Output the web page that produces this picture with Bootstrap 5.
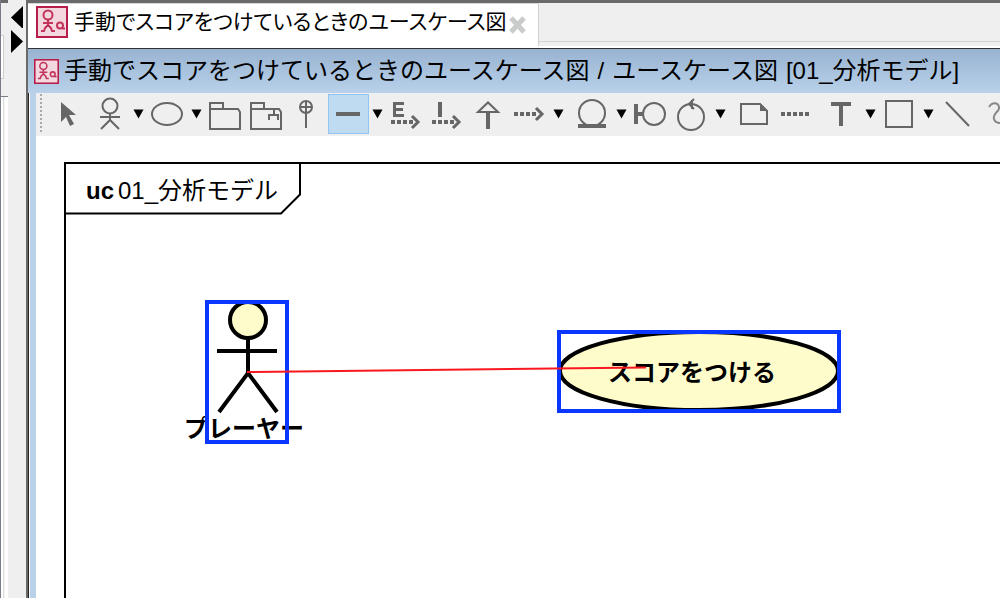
<!DOCTYPE html>
<html lang="ja">
<head>
<meta charset="utf-8">
<meta name="viewport" content="width=device-width, initial-scale=1">
<title>ユースケース図</title>
<link href="https://cdn.jsdelivr.net/npm/bootstrap@5.3.0/dist/css/bootstrap.min.css" rel="stylesheet">
<style>
body{font-family:"Liberation Sans","Noto Sans CJK JP",sans-serif;font-size:24px;line-height:32px;color:#000;background:#fff}
.side-edge{width:8px;border-left:1px solid #777c85;background:linear-gradient(90deg,#fff 2px,#ddd 2px,#ddd 3px,#f4f2f2 3px,#f4f2f2 4px,#fff 4px)}
.side-top{height:97px;background:#efefef;border-top:3px solid #6a6a6a;border-bottom:1px solid #777c85}
.side-box{height:44px;margin-top:32px;border:1px solid #ccc;border-left:0;background:#fff;width:3px}
.split{width:18px;background:#efefef}
.split button,.tool,.drop,.tab-close{border:0;padding:0;background:transparent;display:block}
.main-pane{border-left:2px solid #686b68}
.tabs{height:46px;background:#efefef;border-top:3px solid #6a6a6a}
.tabs:after{content:"";flex:1;border-bottom:1px solid #d2d2d2;height:39px}
.tab-item{width:511px;background:#fff;border-top:1px solid #d8d8d8;border-right:1px solid #d0d0d0;padding:2px 0 0 8px}
.tab-item a{color:#000;text-decoration:none;font-size:21px;font-feature-settings:"palt";margin-left:6px;width:426px}
.tab-rule{height:3px;background:#fff;border-bottom:1px solid #333}
.doc-title{height:44px;font-size:24px;font-weight:400;background:linear-gradient(#98b3d1,#b9d1ea);padding-left:6px;margin:0;gap:5px}
.title-parts{gap:8px}
.doc-body{border-left:1px solid #222;background:#fff;padding-left:1px}
.doc-inner{border-left:6px solid #bad1ea}
.tools{height:43px;background:#efefef;padding:1px 0 0 4px;overflow:hidden}
.grip{width:2px;height:40px;margin-right:6px;background:repeating-linear-gradient(#aaa 0 2px,#efefef 2px 4px)}
.tool{width:41px;height:40px}
.tool svg,.drop svg{display:block}
.drop{width:17px;height:40px}
.group-start{margin-left:5px}
.tool.picked{background:#bfdbf2;box-shadow:inset 0 0 0 1px #8fc5f2}
.ic{fill:none;stroke:#666;stroke-width:2}
.ic .solid{fill:#666;stroke:none}
.sheet{padding:26px 0 0 28px;overflow:hidden}
.frame-box{border-top:2px solid #000;border-left:2px solid #000}
.frame-label{width:236px;height:51px;padding:2px 0 0 20px;gap:4px}
.frame-label svg{position:absolute;left:0;top:0}
.node{position:absolute}
.node-box{border:4px solid #0a37ff}
.actor{left:169px;top:164px;width:84px;height:144px}
.usecase{left:521px;top:194px;width:284px;height:83px}
.node svg{position:absolute;left:0;top:0}
.node-name{position:absolute;font-weight:700;white-space:nowrap}
.actor .node-name{top:113px;left:-21px}
.usecase .node-name{top:27px;left:51px}
.link-line{position:absolute;left:0;top:0;pointer-events:none}
</style>
</head>
<body class="vh-100 overflow-hidden">
<svg class="d-none">
  <symbol id="uc" viewBox="0 0 32 32">
    <rect x="1" y="1" width="30" height="30" fill="#f4d8df" stroke="#b81d49" stroke-width="2"/>
    <g fill="none" stroke="#c2345b" stroke-width="2"><circle cx="12" cy="9" r="4.500"/><path d="M12 14v6M7 17h10M12 19l-3 3-1 3H5M12 19l3 3 1 3h3"/><circle cx="24" cy="19.500" r="3"/><path d="M26 22.500h3"/></g>
  </symbol>
  <symbol id="down" viewBox="0 0 17 40"><path d="M3.500 15.500h10l-5 9z" fill="#000"/></symbol>
</svg>
<div class="d-flex h-100">
  <aside class="d-flex flex-shrink-0">
    <div class="side-edge"><div class="side-top"><div class="side-box"></div></div></div>
    <div class="split">
      <button aria-label="左へ"><svg class="d-block" width="18" height="28"><path d="M3 17.500L15 6v23z"/></svg></button>
      <button aria-label="右へ"><svg class="d-block" width="18" height="26"><path d="M3 2v23l12-11.500z"/></svg></button>
    </div>
  </aside>
  <main class="main-pane d-flex flex-column flex-grow-1 overflow-hidden">
    <nav class="tabs d-flex flex-shrink-0">
      <div class="tab-item d-flex align-items-start flex-shrink-0">
        <svg width="32" height="32" class="flex-shrink-0"><use href="#uc"/></svg>
        <a href="#" class="text-nowrap">手動でスコアをつけているときのユースケース図</a>
        <button class="tab-close ms-2" aria-label="閉じる"><svg width="18" height="32"><path d="M3 10l13 14M16 10L3 24" stroke="#c9cccb" stroke-width="5"/></svg></button>
      </div>
    </nav>
    <div class="tab-rule flex-shrink-0"></div>
    <h1 class="doc-title d-flex align-items-center flex-shrink-0 text-nowrap">
      <svg width="25" height="25" class="flex-shrink-0"><use href="#uc"/></svg>
      <span class="title-parts d-flex"><span>手動でスコアをつけているときのユースケース図</span> <span>/</span> <span>ユースケース図</span> <span>[01_分析モデル]</span></span>
    </h1>
    <div class="doc-body flex-grow-1 d-flex">
      <div class="doc-inner flex-grow-1 d-flex flex-column overflow-hidden">
        <div class="tools d-flex align-items-start flex-shrink-0" role="toolbar">
          <div class="grip flex-shrink-0"></div>
          <button class="tool flex-shrink-0" aria-label="選択"><svg class="ic" width="41" height="40"><path class="solid" d="M13 8l15 13h-7l5 9-4 2-4-9-5 5z"/></svg></button>
          <button class="tool flex-shrink-0" aria-label="アクター"><svg class="ic" width="41" height="40"><circle cx="21" cy="12" r="7.500"/><path d="M11 23h20M21 19v7M12 35l9-9 9 9"/></svg></button>
          <button class="drop flex-shrink-0" aria-label="アクターの種類"><svg width="17" height="40"><use href="#down"/></svg></button>
          <button class="tool flex-shrink-0" aria-label="ユースケース"><svg class="ic" width="41" height="40"><ellipse cx="20" cy="20" rx="15" ry="11"/></svg></button>
          <button class="drop flex-shrink-0" aria-label="ユースケースの種類"><svg width="17" height="40"><use href="#down"/></svg></button>
          <button class="tool flex-shrink-0" aria-label="パッケージ"><svg class="ic" width="41" height="40"><path d="M5 35V9h13v6h15l2 3v17zM5 15h13"/></svg></button>
          <button class="tool flex-shrink-0" aria-label="サブシステム"><svg class="ic" width="41" height="40"><path d="M5 35V9h13v6h15l2 3v17zM5 15h13M28 16v5M23 26v-5h9v5"/></svg></button>
          <button class="tool flex-shrink-0" aria-label="ネスト"><svg class="ic" width="41" height="40"><circle cx="19" cy="13" r="6"/><path d="M19 7v27M13 13h12"/></svg></button>
          <button class="tool picked flex-shrink-0" aria-label="関連"><svg class="ic" width="41" height="40"><path d="M8 20h24" stroke-width="4"/></svg></button>
          <button class="drop flex-shrink-0" aria-label="関連の種類"><svg width="17" height="40"><use href="#down"/></svg></button>
          <button class="tool flex-shrink-0" aria-label="拡張"><svg class="ic" width="41" height="40"><path d="M18 9.500H8.500v12H18M8 15.500h9" stroke-width="3"/><path d="M5 28h22" stroke-width="4" stroke-dasharray="4 2"/><path d="M26 22l6 6-6 6" stroke-width="3"/></svg></button>
          <button class="tool flex-shrink-0" aria-label="包含"><svg class="ic" width="41" height="40"><path d="M13 8v15" stroke-width="4"/><path d="M5 28h22" stroke-width="4" stroke-dasharray="4 2"/><path d="M26 22l6 6-6 6" stroke-width="3"/></svg></button>
          <button class="tool flex-shrink-0" aria-label="汎化"><svg class="ic" width="41" height="40"><path d="M10 18L20 8.500 30 18z"/><path d="M20 18v17" stroke-width="4"/></svg></button>
          <button class="tool flex-shrink-0" aria-label="依存"><svg class="ic" width="41" height="40"><path d="M5 20h22" stroke-width="4" stroke-dasharray="4 2"/><path d="M27 14l6 6-6 6" stroke-width="3"/></svg></button>
          <button class="drop flex-shrink-0" aria-label="依存の種類"><svg width="17" height="40"><use href="#down"/></svg></button>
          <button class="tool flex-shrink-0 group-start" aria-label="エンティティ"><svg class="ic" width="41" height="40"><circle cx="20" cy="19" r="13"/><path d="M6 32h28" stroke-width="4"/></svg></button>
          <button class="drop flex-shrink-0" aria-label="エンティティの種類"><svg width="17" height="40"><use href="#down"/></svg></button>
          <button class="tool flex-shrink-0" aria-label="バウンダリ"><svg class="ic" width="41" height="40"><circle cx="24" cy="20" r="11"/><path d="M6 10v20M6 20h7" stroke-width="4"/></svg></button>
          <button class="tool flex-shrink-0" aria-label="コントロール"><svg class="ic" width="41" height="40"><circle cx="20" cy="23" r="13"/><path d="M23 5l-5 5 5 5M21 6v9"/></svg></button>
          <button class="drop flex-shrink-0" aria-label="コントロールの種類"><svg width="17" height="40"><use href="#down"/></svg></button>
          <button class="tool flex-shrink-0 group-start" aria-label="ノート"><svg class="ic" width="41" height="40"><path d="M7 10h19l7 7v13H7z"/><path class="solid" d="M26 9v8h8z"/></svg></button>
          <button class="tool flex-shrink-0" aria-label="ノートアンカー"><svg class="ic" width="41" height="40"><path d="M6 20h28" stroke-width="4" stroke-dasharray="4 2"/></svg></button>
          <button class="tool flex-shrink-0 group-start" aria-label="テキスト"><svg class="ic" width="41" height="40"><path d="M10 10h20M20 10v22" stroke-width="4"/></svg></button>
          <button class="drop flex-shrink-0" aria-label="テキストの種類"><svg width="17" height="40"><use href="#down"/></svg></button>
          <button class="tool flex-shrink-0" aria-label="四角形"><svg class="ic" width="41" height="40"><path d="M7 7h26v26H7z"/></svg></button>
          <button class="drop flex-shrink-0" aria-label="図形の種類"><svg width="17" height="40"><use href="#down"/></svg></button>
          <button class="tool flex-shrink-0" aria-label="直線"><svg class="ic" width="41" height="40"><path d="M9 8l23 24"/></svg></button>
          <button class="tool flex-shrink-0" aria-label="フリーハンド"><svg class="ic" width="41" height="40"><path d="M11 13c3-5 9-5 10 0s-7 6-5 12c1 4 6 5 11 3" stroke="#888"/></svg></button>
        </div>
        <section class="sheet position-relative flex-grow-1 d-flex">
          <div class="frame-box flex-grow-1">
            <div class="frame-label position-relative d-flex align-items-center text-nowrap">
              <svg width="236" height="51"><path d="M0 49.500h215l19-19V0" fill="none" stroke="#000" stroke-width="2"/></svg>
              <b>uc</b> <span>01_分析モデル</span>
            </div>
          </div>
          <div class="node actor">
            <svg width="84" height="144" fill="none" stroke="#000" stroke-width="4"><circle cx="43" cy="20" r="18" fill="#fffccc"/><path d="M43 38v35M12 51h60M14 112l29-39 29 39"/></svg>
            <span class="node-name">プレーヤー</span>
            <div class="node-box position-absolute w-100 h-100"></div>
          </div>
          <div class="node usecase">
            <svg width="284" height="83"><ellipse cx="142" cy="41" rx="139" ry="39" fill="#fffccc" stroke="#000" stroke-width="4"/></svg>
            <div class="node-box position-absolute w-100 h-100"></div>
            <span class="node-name">スコアをつける</span>
          </div>
          <svg class="link-line" width="700" height="300"><path d="M211 236L610 231.500" stroke="#fa1820" stroke-width="2"/></svg>
        </section>
      </div>
    </div>
  </main>
</div>
<script src="https://cdn.jsdelivr.net/npm/bootstrap@5.3.0/dist/js/bootstrap.bundle.min.js"></script>
</body>
</html>
